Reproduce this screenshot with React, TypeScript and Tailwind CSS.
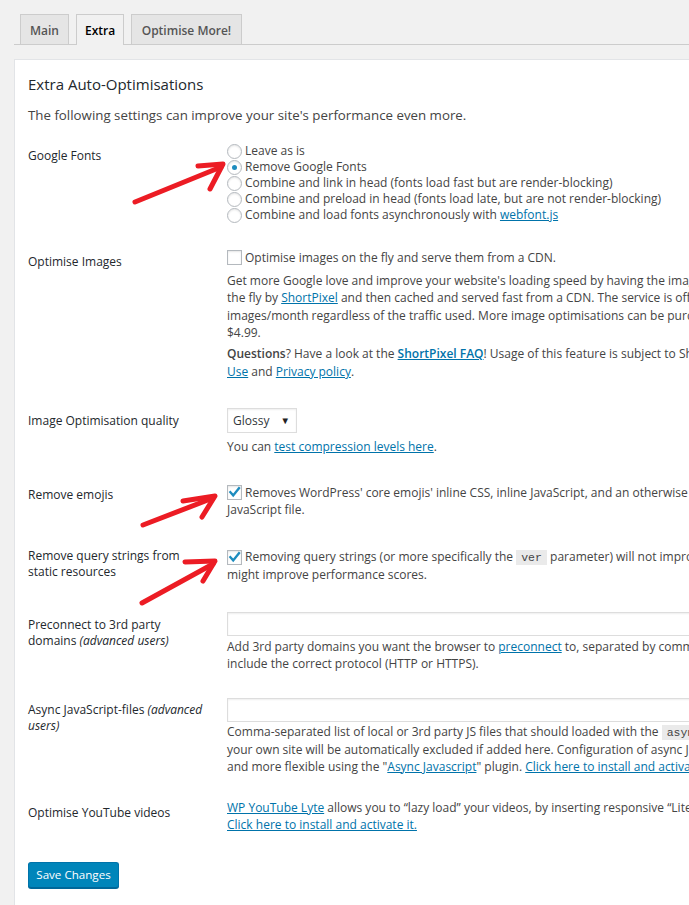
import React from "react";

const A = ({ children, bold }: { children: React.ReactNode; bold?: boolean }) => (
  <a className={"text-[#0073aa] underline " + (bold ? "font-semibold" : "")}>{children}</a>
);

const Code = ({ children }: { children: React.ReactNode }) => (
  <code className="bg-[#eaeaea] px-[5px] py-[1px] font-['Liberation_Mono',monospace] text-[11.5px] text-[#444]">
    {children}
  </code>
);

const Checkbox = ({ checked }: { checked?: boolean }) => (
  <span className="relative inline-block w-[15px] h-[15px] shrink-0 border border-[#b4b9be] bg-white shadow-[inset_0_1px_2px_rgba(0,0,0,0.1)]">
    {checked && (
      <svg className="absolute left-[0px] top-[0px]" width="13" height="13" viewBox="0 0 13 13">
        <path d="M2.4 6.2 L5.2 9.4 L11 2.2" fill="none" stroke="#1e8cbe" strokeWidth="2.4" strokeLinecap="square" />
      </svg>
    )}
  </span>
);

const Radio = ({ checked }: { checked?: boolean }) => (
  <span className="flex items-center justify-center w-[15px] h-[15px] shrink-0 rounded-full border border-[#b4b9be] bg-white shadow-[inset_0_1px_2px_rgba(0,0,0,0.1)]">
    {checked && <span className="block w-[5px] h-[5px] rounded-full bg-[#1e8cbe]" />}
  </span>
);

const Line = ({ children }: { children: React.ReactNode }) => (
  <div className="whitespace-nowrap">{children}</div>
);

export default function App() {
  return (
    <div className="relative w-[689px] h-[905px] overflow-hidden bg-[#f1f1f1] font-['Open_Sans',sans-serif] text-[12px] text-[#444]">
      <div className="pl-[14px] pt-[14px]">
        {/* tabs */}
        <div className="flex items-end gap-[7px] pl-[6px] border-b border-[#ccc] h-[31px] w-[1000px]">
          <div className="h-[30px] px-[9px] pt-[3px] flex items-center border border-b-0 border-[#ccc] bg-[#e5e5e5] text-[#555] font-semibold text-[12px]">
            Main
          </div>
          <div className="h-[31px] -mb-[1px] px-[8px] pt-[2px] flex items-center border border-b-0 border-[#ccc] bg-[#f1f1f1] text-[#000] font-semibold text-[12px]">
            Extra
          </div>
          <div className="h-[30px] px-[9.5px] pt-[3px] flex items-center border border-b-0 border-[#ccc] bg-[#e5e5e5] text-[#555] font-semibold text-[12px]">
            Optimise More!
          </div>
        </div>

        {/* card */}
        <div className="mt-[14px] w-[1000px] h-[900px] bg-white border border-[#e2e4e7] pl-[13px] pt-[13px]">
          <h2 className="text-[15px] leading-[22px] text-[#23282d] font-normal">Extra Auto-Optimisations</h2>
          <p className="mt-[10px] text-[13.3px] leading-[20px] text-[#444]">
            The following settings can improve your site's performance even more.
          </p>

          {/* Google Fonts */}
          <div className="flex mt-[18px]">
            <div className="w-[199px] shrink-0 pt-[4px] leading-[17px] text-[#23282d]">Google Fonts</div>
            <div className="leading-[16px]">
              {[
                ["Leave as is", false],
                ["Remove Google Fonts", true],
                ["Combine and link in head (fonts load fast but are render-blocking)", false],
                ["Combine and preload in head (fonts load late, but are not render-blocking)", false],
              ].map(([t, c]) => (
                <div key={t as string} className="flex items-center gap-[3px] h-[16px] whitespace-nowrap">
                  <Radio checked={c as boolean} />
                  <span>{t as string}</span>
                </div>
              ))}
              <div className="flex items-center gap-[3px] h-[16px] whitespace-nowrap">
                <Radio />
                <span>
                  Combine and load fonts asynchronously with <A>webfont.js</A>
                </span>
              </div>
            </div>
          </div>

          {/* Optimise Images */}
          <div className="flex mt-[26px]">
            <div className="w-[199px] shrink-0 pt-[4px] leading-[17px] text-[#23282d]">Optimise Images</div>
            <div>
              <div className="flex items-center gap-[3px] h-[17px] whitespace-nowrap">
                <Checkbox />
                <span>Optimise images on the fly and serve them from a CDN.</span>
              </div>
              <div className="mt-[5.5px] leading-[17.5px]">
                <Line>Get more Google love and improve your website's loading speed by having the images optimized on</Line>
                <Line>
                  the fly by <A>ShortPixel</A> and then cached and served fast from a CDN. The service is offered for free for 100.000
                </Line>
                <Line>images/month regardless of the traffic used. More image optimisations can be purchased for as little as</Line>
                <Line>$4.99.</Line>
              </div>
              <div className="mt-[3.5px] leading-[18px]">
                <Line>
                  <b className="font-semibold">Questions</b>? Have a look at the <A bold>ShortPixel FAQ</A>! Usage of this feature is subject to ShortPixel's <A>Terms of</A>
                </Line>
                <Line>
                  <A>Use</A> and <A>Privacy policy</A>.
                </Line>
              </div>
            </div>
          </div>

          {/* Image quality */}
          <div className="flex mt-[27px]">
            <div className="w-[199px] shrink-0 pt-[3.5px] leading-[17px] text-[#23282d]">Image Optimisation quality</div>
            <div>
              <div className="flex items-center justify-between w-[70px] h-[25px] border border-[#ddd] bg-white pl-[5px] pr-[6px] text-[#32373c] shadow-[inset_0_1px_2px_rgba(0,0,0,0.07)]">
                <span>Glossy</span>
                <span className="text-[9.5px] text-[#222] leading-none">▼</span>
              </div>
              <div className="mt-[5px] leading-[18px] whitespace-nowrap">
                You can <A>test compression levels here</A>.
              </div>
            </div>
          </div>

          {/* Remove emojis */}
          <div className="flex mt-[27.5px]">
            <div className="w-[199px] shrink-0 pt-[2px] leading-[17px] text-[#23282d]">Remove emojis</div>
            <div className="leading-[17px]">
              <div className="flex items-center gap-[3px] h-[17px] whitespace-nowrap">
                <Checkbox checked />
                <span>Removes WordPress' core emojis' inline CSS, inline JavaScript, and an otherwise un-needed</span>
              </div>
              <Line>JavaScript file.</Line>
            </div>
          </div>

          {/* Remove query strings */}
          <div className="flex mt-[30.5px]">
            <div className="w-[199px] shrink-0 pt-[0px] leading-[16px] text-[#23282d]">
              Remove query strings from
              <br />
              static resources
            </div>
            <div className="leading-[18px]">
              <div className="flex items-center gap-[3px] h-[18px] whitespace-nowrap">
                <Checkbox checked />
                <span>
                  Removing query strings (or more specifically the <Code>ver</Code> parameter) will not improve load time, but
                </span>
              </div>
              <Line>might improve performance scores.</Line>
            </div>
          </div>

          {/* Preconnect */}
          <div className="flex mt-[28px]">
            <div className="w-[199px] shrink-0 pt-[5px] leading-[16px] text-[#23282d]">
              Preconnect to 3rd party
              <br />
              domains <i>(advanced users)</i>
            </div>
            <div>
              <div className="w-[600px] h-[24px] border border-[#ddd] bg-white shadow-[inset_0_1px_2px_rgba(0,0,0,0.07)]" />
              <div className="mt-[1.5px] leading-[17px]">
                <Line>
                  Add 3rd party domains you want the browser to <A>preconnect</A> to, separated by comma's. Make sure to
                </Line>
                <Line>include the correct protocol (HTTP or HTTPS).</Line>
              </div>
            </div>
          </div>

          {/* Async */}
          <div className="flex mt-[26.5px]">
            <div className="w-[199px] shrink-0 pt-[4px] leading-[16px] text-[#23282d]">
              Async JavaScript-files <i>(advanced</i>
              <br />
              <i>users)</i>
            </div>
            <div>
              <div className="w-[600px] h-[24px] border border-[#ddd] bg-white shadow-[inset_0_1px_2px_rgba(0,0,0,0.07)]" />
              <div className="mt-[0.5px] leading-[17px]">
                <Line>
                  Comma-separated list of local or 3rd party JS files that should loaded with the <Code>async</Code> flag. JS-files from
                </Line>
                <Line>your own site will be automatically excluded if added here. Configuration of async JS is easier</Line>
                <Line>
                  and more flexible using the "<A>Async Javascript</A>" plugin. <A>Click here to install and activate it.</A>
                </Line>
              </div>
            </div>
          </div>

          {/* YouTube */}
          <div className="flex mt-[24px]">
            <div className="w-[199px] shrink-0 pt-[5px] leading-[17px] text-[#23282d]">Optimise YouTube videos</div>
            <div className="leading-[17px]">
              <Line>
                <A>WP YouTube Lyte</A> allows you to “lazy load” your videos, by inserting responsive “Lite YouTube Embeds”.
              </Line>
              <Line>
                <A>Click here to install and activate it.</A>
              </Line>
            </div>
          </div>

          <div className="mt-[29.5px]">
            <button className="h-[26px] w-[91px] rounded-[3px] border border-[#0073aa] border-b-[#006799] bg-[#0085ba] text-white text-[11.6px] shadow-[0_1px_0_#006799]">
              Save Changes
            </button>
          </div>
        </div>
      </div>

      {/* red annotation arrows */}
      <svg className="absolute left-0 top-0 pointer-events-none" width="689" height="905" viewBox="0 0 689 905">
        <g fill="none" stroke="#ec1c24" strokeWidth="5" strokeLinecap="round" strokeLinejoin="round">
          <path d="M135 202 L221 167" />
          <polyline points="198,166 223,164 210,189" />
          <path d="M143 525 L213 498" />
          <polyline points="183,501 215,496 202,517" />
          <path d="M142 603 L213 564" />
          <polyline points="185,562 215,561 203,581" />
        </g>
      </svg>
    </div>
  );
}
